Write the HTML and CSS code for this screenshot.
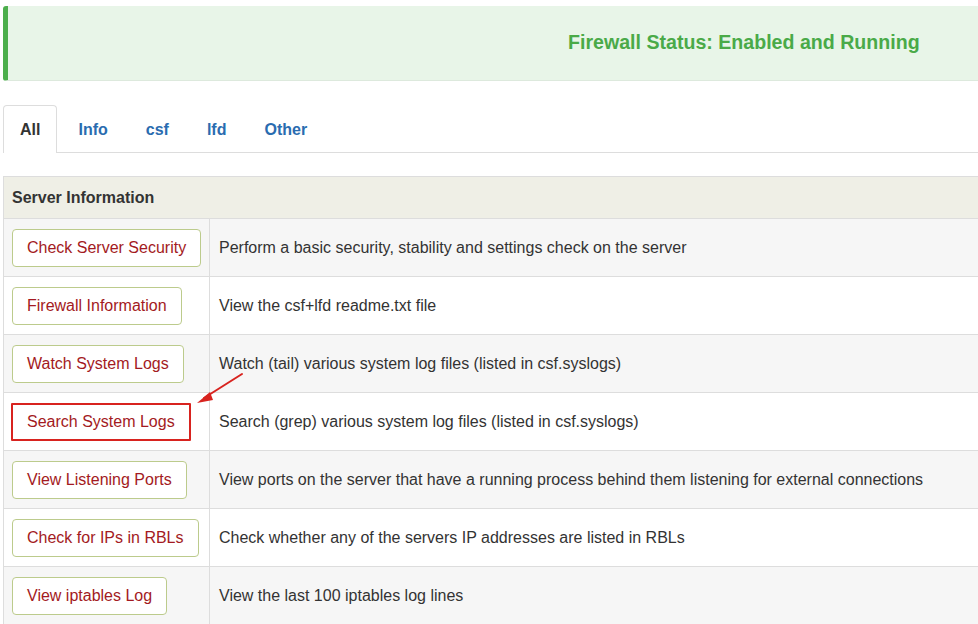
FILE: index.html
```html
<!DOCTYPE html>
<html>
<head>
<meta charset="utf-8">
<link rel="stylesheet" href="styles.css">
</head>
<body>
<div class="page">
  <div class="status">Firewall Status: Enabled and Running</div>
  <ul class="tabs">
    <li class="tab active">All</li>
    <li class="tab">Info</li>
    <li class="tab">csf</li>
    <li class="tab">lfd</li>
    <li class="tab">Other</li>
  </ul>
  <table class="panel">
    <thead>
      <tr><th colspan="2">Server Information</th></tr>
    </thead>
    <tbody>
      <tr><td class="act"><button class="btn">Check Server Security</button></td><td class="desc">Perform a basic security, stability and settings check on the server</td></tr>
      <tr><td class="act"><button class="btn">Firewall Information</button></td><td class="desc">View the csf+lfd readme.txt file</td></tr>
      <tr><td class="act"><button class="btn">Watch System Logs</button></td><td class="desc">Watch (tail) various system log files (listed in csf.syslogs)</td></tr>
      <tr><td class="act"><button class="btn marked">Search System Logs</button></td><td class="desc">Search (grep) various system log files (listed in csf.syslogs)</td></tr>
      <tr><td class="act"><button class="btn">View Listening Ports</button></td><td class="desc">View ports on the server that have a running process behind them listening for external connections</td></tr>
      <tr><td class="act"><button class="btn">Check for IPs in RBLs</button></td><td class="desc">Check whether any of the servers IP addresses are listed in RBLs</td></tr>
      <tr><td class="act"><button class="btn">View iptables Log</button></td><td class="desc">View the last 100 iptables log lines</td></tr>
    </tbody>
  </table>
  <svg class="arrow" width="60" height="40" viewBox="0 0 60 40">
    <line x1="50" y1="4" x2="12" y2="28" stroke="#d8231f" stroke-width="2" stroke-linecap="round"/>
    <polygon points="5,33 18,22 21,30" fill="#d8231f"/>
  </svg>
</div>
</body>
</html>
```
FILE: styles.css
```css
html, body {
  margin: 0;
  padding: 0;
  background: #ffffff;
  overflow: hidden;
}
body {
  font-family: "Liberation Sans", Arial, Helvetica, sans-serif;
  color: #333333;
}
.page {
  position: relative;
  width: 975px;
  padding: 6px 0 0 3px;
}
.status {
  height: 74px;
  line-height: 72px;
  background: #e8f5e8;
  border-left: 5px solid #4cae4c;
  border-bottom: 1px solid #dde9dd;
  border-radius: 3px 0 0 3px;
  color: #4aaa48;
  font-weight: bold;
  font-size: 19.6px;
  padding-left: 560px;
}
.tabs {
  list-style: none;
  margin: 24px 0 0 0;
  padding: 0;
  display: flex;
  border-bottom: 1px solid #dddddd;
  height: 47px;
}
.tab {
  padding: 0 16px;
  margin-right: 4px;
  border: 1px solid transparent;
  border-bottom: none;
  line-height: 47px;
  font-size: 16px;
  font-weight: bold;
  color: #2a6cb0;
  border-radius: 4px 4px 0 0;
}
.tab.active {
  color: #333333;
  border-color: #dddddd;
  background: #ffffff;
  height: 47px;
  margin-bottom: -1px;
}
.panel {
  margin-top: 23px;
  width: 975px;
  border-collapse: collapse;
  border: 1px solid #dddddd;
  border-right: none;
  font-size: 16px;
}
.panel th {
  background: #efefe6;
  text-align: left;
  height: 41px;
  padding: 0 8px;
  font-weight: bold;
  color: #333333;
  border-bottom: 1px solid #dddddd;
}
.panel td {
  height: 57px;
  border-bottom: 1px solid #dddddd;
  padding: 0;
  vertical-align: middle;
}
.panel tbody tr:nth-child(odd) td {
  background: #f6f6f6;
}
.act {
  width: 197px;
  padding: 0 0 0 8px !important;
  border-right: 1px solid #dddddd;
}
.desc {
  padding-left: 9px !important;
  color: #333333;
  white-space: nowrap;
}
.btn {
  font-family: "Liberation Sans", Arial, Helvetica, sans-serif;
  font-size: 16px;
  color: #a31a22;
  background: #ffffff;
  border: 1px solid #bccb8c;
  border-radius: 4px;
  height: 38px;
  padding: 0 14px;
  display: block;
  margin-top: 1px;
}
.btn.marked {
  border: 2px solid #d8231f;
  border-radius: 1px;
  padding: 0 14px;
  margin-left: -1px;
  height: 38px;
}
.arrow {
  position: absolute;
  left: 192px;
  top: 370px;
}
```
